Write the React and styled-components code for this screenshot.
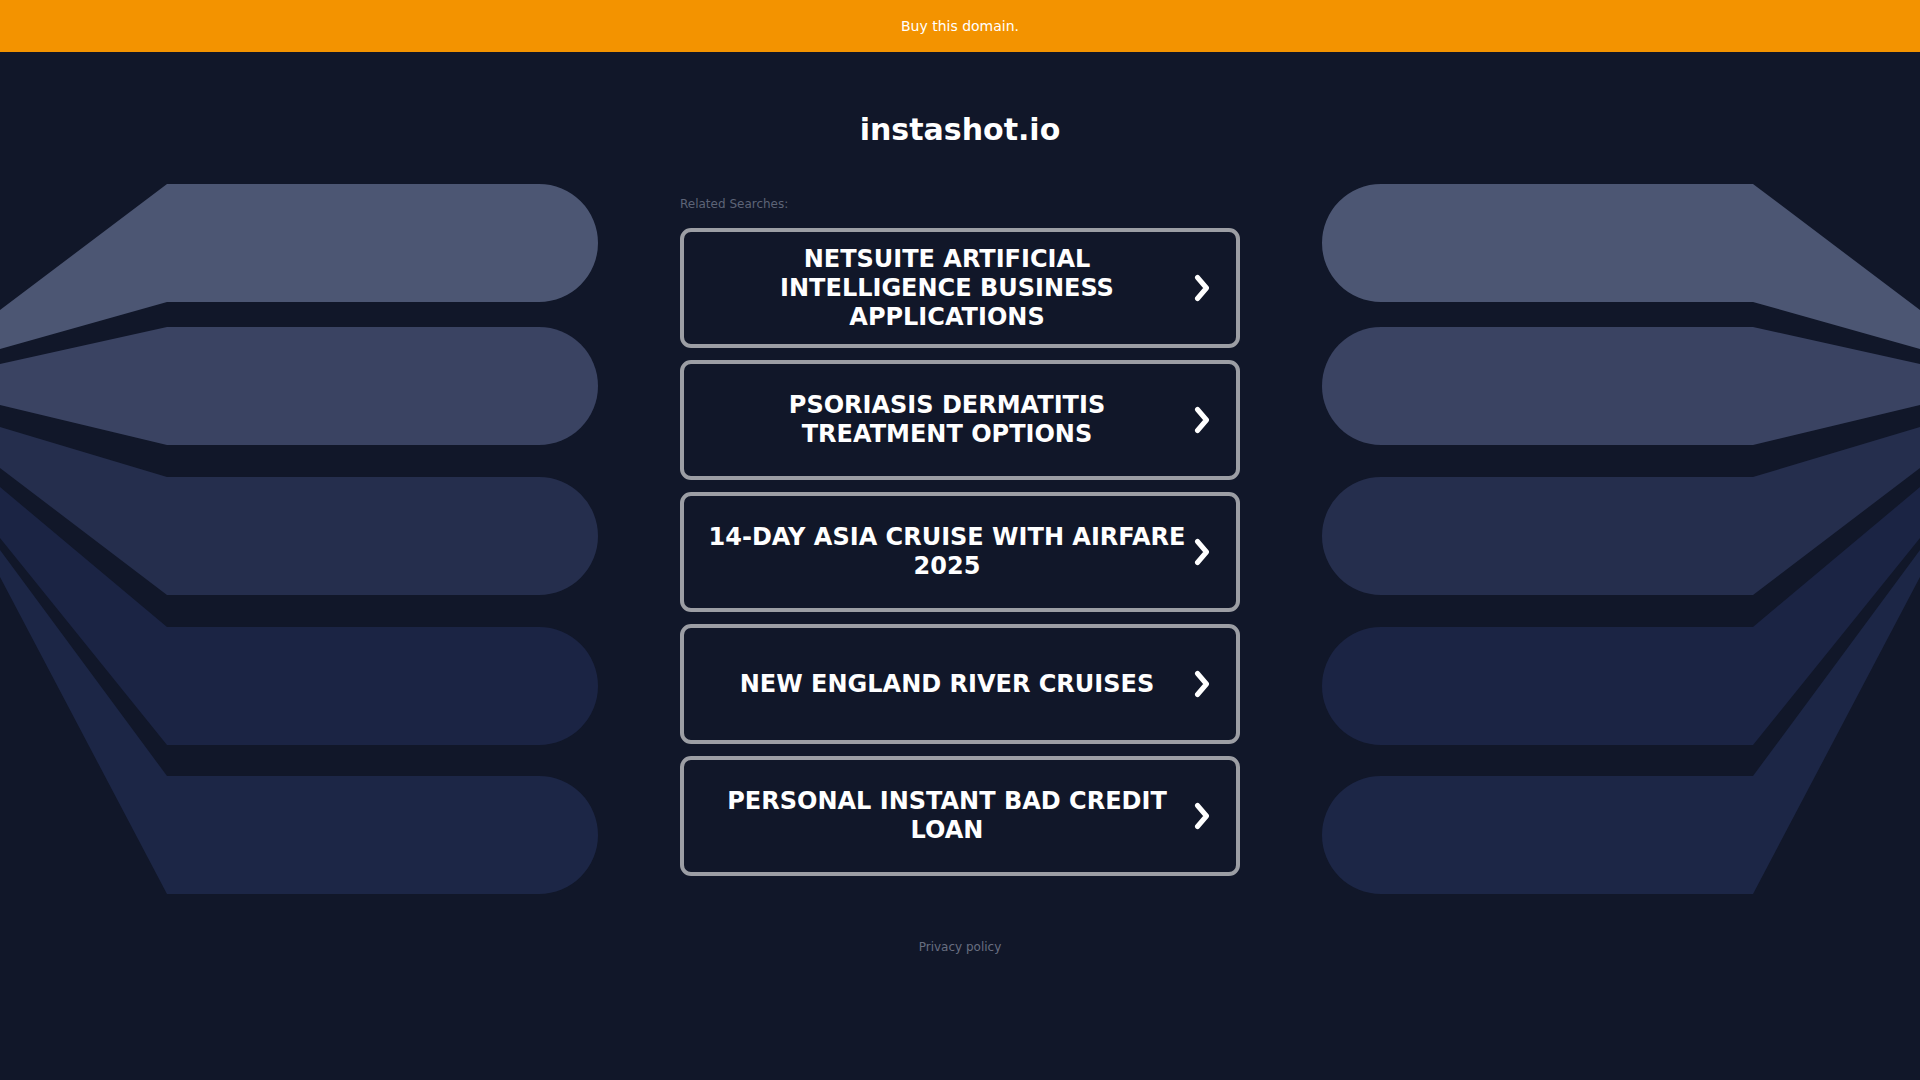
import React from 'react'
import styled, { createGlobalStyle } from 'styled-components'

const GlobalStyle = createGlobalStyle`
    body {
        margin: 0;
        background: #111729;
        font-family: "DejaVu Sans", "Liberation Sans", sans-serif;
    }
`

const Page = styled.div`
    min-height: 100vh;
    background: #111729;
    display: flex;
    flex-direction: column;
`

const TopBar = styled.div`
    height: 52px;
    background: #f39300;
    display: flex;
    align-items: center;
    justify-content: center;
    color: #fff;
    font-size: 14px;
`

const Title = styled.h1`
    margin: 60px 0 0;
    text-align: center;
    color: #fff;
    font-size: 30px;
    line-height: 35px;
    font-weight: bold;
`

const Main = styled.div`
    margin-top: 33px;
    display: grid;
    grid-template-columns: 1fr 560px 1fr;
    align-items: start;
`

const Deco = styled.svg`
    display: block;
    width: 680px;
    height: 720px;
    justify-self: ${props => props.$flip ? 'end' : 'start'};
    transform: ${props => props.$flip ? 'scaleX(-1)' : 'none'};
`

const Center = styled.div`
    padding-top: 17px;
`

const Label = styled.div`
    color: #5d6477;
    font-size: 12px;
    line-height: 14px;
    margin-bottom: 17px;
`

const SearchBox = styled.a`
    box-sizing: border-box;
    height: 120px;
    margin-bottom: 12px;
    border: 4px solid #9c9ea4;
    border-radius: 11px;
    display: flex;
    align-items: center;
    padding: 0 20px 0 23px;
    text-decoration: none;
    cursor: pointer;
`

const SearchText = styled.span`
    flex: 1;
    text-align: center;
    color: #fff;
    font-size: 24px;
    line-height: 29px;
    font-weight: bold;
    text-transform: uppercase;
`

const ArrowWrap = styled.span`
    width: 29px;
    display: flex;
    justify-content: center;
`

const Footer = styled.div`
    margin-top: 40px;
    text-align: center;
    color: #686e80;
    font-size: 12px;
    line-height: 14px;
`

const shapes = [
    { fill: '#4c5673', top: 4, left: [130, 169] },
    { fill: '#3a4362', top: 147, left: [184, 225] },
    { fill: '#252e4d', top: 297, left: [247, 288] },
    { fill: '#1b2444', top: 447, left: [307, 358] },
    { fill: '#1c2646', top: 596, left: [370, 397] },
]

const Shapes = ({ flip }) => (
    <Deco $flip={flip} viewBox="0 0 680 720">
        {shapes.map(s => {
            const b = s.top + 118
            return (
                <path
                    key={s.top}
                    fill={s.fill}
                    d={`M0,${s.left[0]} L167,${s.top} L539,${s.top} A59,59 0 0 1 539,${b} L167,${b} L0,${s.left[1]} Z`}
                />
            )
        })}
    </Deco>
)

const Arrow = () => (
    <svg width="16" height="28" viewBox="0 0 16 28">
        <polyline
            points="3.5,3.5 12.5,14 3.5,24.5"
            fill="none"
            stroke="#fff"
            strokeWidth="5"
            strokeLinecap="round"
            strokeLinejoin="round"
        />
    </svg>
)

const searches = [
    'NetSuite Artificial Intelligence Business Applications',
    'Psoriasis Dermatitis Treatment Options',
    '14-Day Asia Cruise with Airfare 2025',
    'New England River Cruises',
    'Personal Instant Bad Credit Loan',
]

const App = () => {
    return (
        <Page>
            <GlobalStyle />
            <TopBar>Buy this domain.</TopBar>
            <Title>instashot.io</Title>
            <Main>
                <Shapes />
                <Center>
                    <Label>Related Searches:</Label>
                    {searches.map(item => (
                        <SearchBox key={item}>
                            <SearchText>{item}</SearchText>
                            <ArrowWrap><Arrow /></ArrowWrap>
                        </SearchBox>
                    ))}
                </Center>
                <Shapes flip />
            </Main>
            <Footer>Privacy policy</Footer>
        </Page>
    )
}

export default App
